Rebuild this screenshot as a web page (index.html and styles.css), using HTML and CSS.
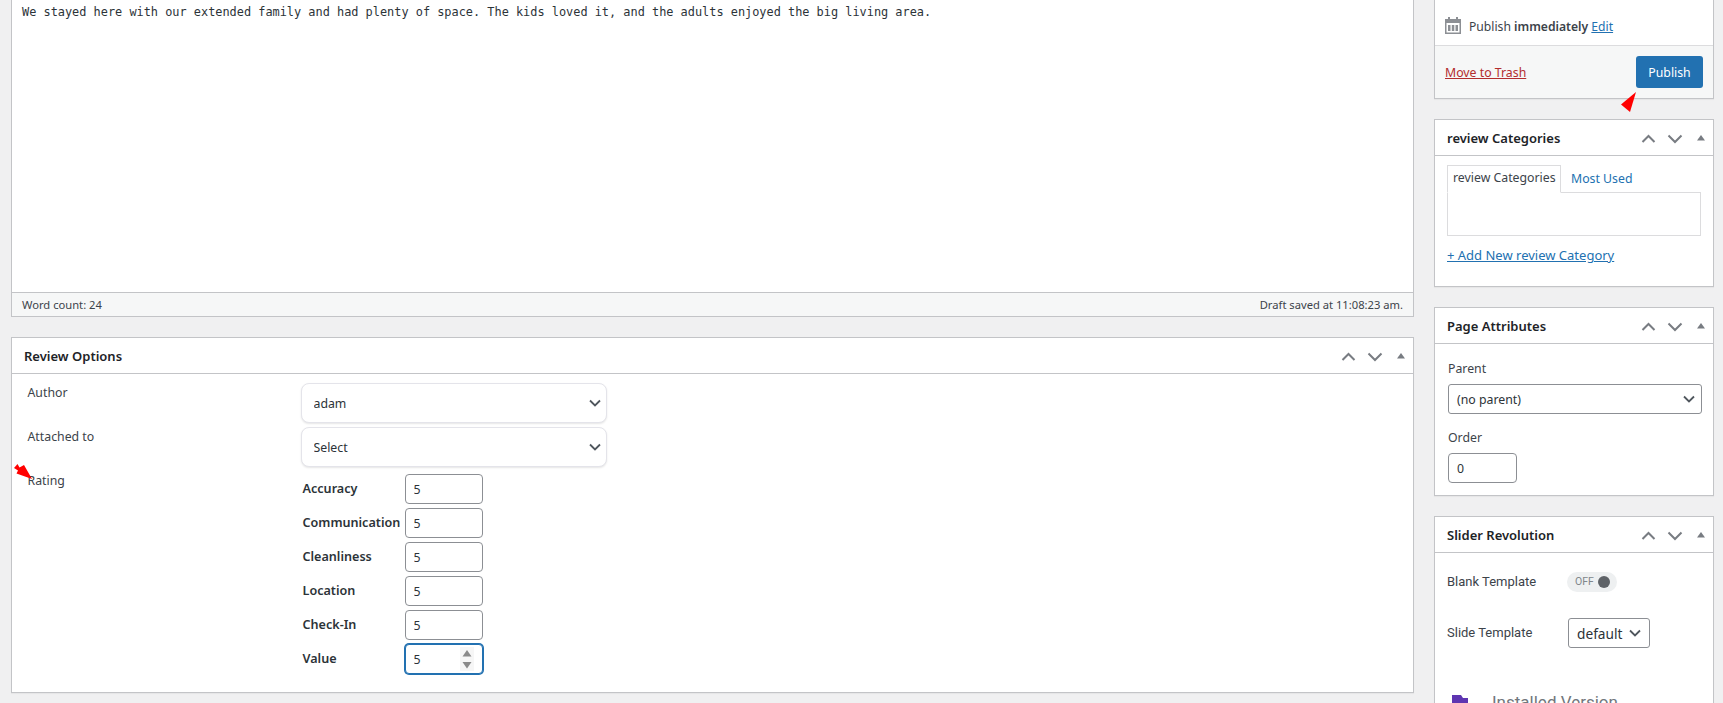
FILE: index.html
```html
<!DOCTYPE html>
<html lang="en">
<head>
<meta charset="utf-8">
<title>Edit review</title>
<link rel="stylesheet" href="styles.css">
</head>
<body>
<svg class="defs" width="0" height="0" aria-hidden="true">
  <symbol id="handles" viewBox="0 0 64 12">
    <path d="M1.500 10 7.500 4l6 6" fill="none" stroke="#787c82" stroke-width="2"/>
    <path d="M27.500 3.500l6.500 6.500 6.500-6.500" fill="none" stroke="#787c82" stroke-width="2"/>
    <path d="M56 8.500l4-5.500 4 5.500z" fill="#787c82"/>
  </symbol>
</svg>
<div class="page">
  <main class="main">
    <section class="editor">
      <div class="editor-text">We stayed here with our extended family and had plenty of space. The kids loved it, and the adults enjoyed the big living area.</div>
      <div class="editor-foot"><span>Word count: 24</span><span>Draft saved at 11:08:23 am.</span></div>
    </section>

    <section class="box review">
      <header class="box-head"><h2>Review Options</h2><svg class="handles"><use href="#handles"/></svg></header>
      <div class="review-body">
        <div class="review-label">Author</div>
        <div class="review-field"><select class="soft-select"><option>adam</option></select></div>
        <div class="review-label">Attached to</div>
        <div class="review-field"><select class="soft-select"><option>Select</option></select></div>
        <div class="review-label rating-label">Rating</div>
        <div class="ratings">
          <label class="rating"><b>Accuracy</b><input class="num" type="text" value="5"></label>
          <label class="rating"><b>Communication</b><input class="num" type="text" value="5"></label>
          <label class="rating"><b>Cleanliness</b><input class="num" type="text" value="5"></label>
          <label class="rating"><b>Location</b><input class="num" type="text" value="5"></label>
          <label class="rating"><b>Check-In</b><input class="num" type="text" value="5"></label>
          <label class="rating"><b>Value</b>
            <span class="num-wrap">
              <input class="num focused" type="text" value="5">
              <svg class="spin" width="14" height="24" viewBox="0 0 14 24"><rect width="14" height="24" fill="#f6f6f6"/><path d="M2.500 9.500 7 3l4.500 6.500z" fill="#8a8a8a"/><path d="M2.500 15 7 21.500l4.500-6.500z" fill="#8a8a8a"/></svg>
            </span>
          </label>
        </div>
      </div>
    </section>
  </main>

  <aside class="side">
    <section class="box publish">
      <div class="pub-row">
        <svg class="cal" width="16" height="17" viewBox="0 0 16 17"><path d="M3 0h2v2h6V0h2v2h3v15H0V2h3zM1.500 6v9.500h13V6zM3 8h2.500v6H3zm3.800 0h2.500v6H6.800zm3.700 0H13v6h-2.500z" fill="#8c8f94"/></svg>
        <span>Publish <b>immediately</b> <a href="#">Edit</a></span>
      </div>
      <div class="pub-actions"><a class="trash" href="#">Move to Trash</a><button class="publish-btn">Publish</button></div>
    </section>

    <section class="box cats">
      <header class="box-head"><h2>review Categories</h2><svg class="handles"><use href="#handles"/></svg></header>
      <div class="cats-body">
        <div class="tabs"><span class="tab active">review Categories</span><a class="tab" href="#">Most Used</a></div>
        <div class="tab-panel"></div>
        <a class="add-link" href="#">+ Add New review Category</a>
      </div>
    </section>

    <section class="box attrs">
      <header class="box-head"><h2>Page Attributes</h2><svg class="handles"><use href="#handles"/></svg></header>
      <div class="attrs-body">
        <div class="attr-label">Parent</div>
        <select class="wp-select parent"><option>(no parent)</option></select>
        <div class="attr-label order-label">Order</div>
        <input class="order" type="text" value="0">
      </div>
    </section>

    <section class="box slider">
      <header class="box-head"><h2>Slider Revolution</h2><svg class="handles"><use href="#handles"/></svg></header>
      <div class="slider-body">
        <div class="slider-row blank"><span class="slider-label">Blank Template</span><span class="toggle">OFF<i></i></span></div>
        <div class="slider-row tmpl"><span class="slider-label">Slide Template</span><select class="wp-select default"><option>default</option></select></div>
        <div class="version">
          <svg width="16" height="14" viewBox="0 0 16 14"><path d="M0 0h9l2 3h5v11H0z" fill="#5e35b1"/></svg>
          <span>Installed Version</span>
        </div>
      </div>
    </section>
  </aside>
</div>
<svg class="marks" width="1723" height="703" aria-hidden="true">
  <path d="M1636 92 1621 104.500 1630 112z" fill="#f00"/>
  <path d="M32 479 24 465 19.500 467.500 17.500 464 14 468 18 470.500 16.500 473.500z" fill="#f00"/>
</svg>
</body>
</html>
```
FILE: styles.css
```css
* { box-sizing: border-box; }
html, body { margin: 0; height: 703px; overflow: hidden; }
body {
  background: #f0f0f1;
  color: #3c434a;
  font-family: "Noto Sans", "Open Sans", sans-serif;
  font-size: 12.300px;
  line-height: 18px;
  position: relative;
}
a { color: #2271b1; }
b { font-weight: 600; }
.defs { position: absolute; }
.page { display: flex; gap: 20px; padding-left: 11px; align-items: flex-start; }
.main { width: 1403px; flex: none; }
.side { width: 280px; flex: none; }

.box { background: #fff; border: 1px solid #c3c4c7; box-shadow: 0 1px 1px rgba(0,0,0,.04); }
.box-head {
  height: 36px; display: flex; align-items: center; justify-content: space-between;
  padding: 0 8px 0 12px; border-bottom: 1px solid #c3c4c7; color: #1d2327;
}
.box-head h2 { margin: 0; font-size: 13px; font-weight: 600; line-height: 18px; }
.handles { width: 64px; height: 12px; }

.editor { border: 1px solid #c3c4c7; border-top: 0; background: #fff; }
.editor-text {
  height: 292px; padding: 3px 10px;
  font-family: "DejaVu Sans Mono", monospace; font-size: 11.900px; line-height: 19px; color: #2c3338;
}
.editor-foot {
  height: 24px; display: flex; justify-content: space-between; align-items: center;
  padding: 0 10px; background: #f6f7f7; border-top: 1px solid #c3c4c7; font-size: 11.200px;
}

.review { margin-top: 20px; height: 356px; }
.review-body { display: grid; grid-template-columns: 273px 306px; padding: 9px 0 0 15.500px; row-gap: 4px; }
.review-label { padding-top: 1px; }
.soft-select, .wp-select {
  appearance: none; font: inherit; color: #2c3338; background-color: #fff; background-repeat: no-repeat;
  background-image: url("data:image/svg+xml,%3Csvg xmlns='http://www.w3.org/2000/svg' width='12' height='8' viewBox='0 0 12 8'%3E%3Cpath d='M1 1.500l5 5 5-5' fill='none' stroke='%2350575e' stroke-width='1.800'/%3E%3C/svg%3E");
}
.soft-select {
  width: 306px; height: 40px; display: block; padding: 1px 24px 0 12px;
  border: 1px solid #e4e4ea; border-radius: 8px; box-shadow: 0 1px 2px rgba(0,0,0,.1);
  background-position: right 5px center;
}
.ratings { display: flex; flex-direction: column; gap: 4px; padding-top: 3px; }
.rating { display: flex; align-items: center; height: 30px; color: #2c3338; }
.rating b { width: 104px; flex: none; padding-left: 2px; font-size: 12.600px; }
.num {
  width: 78px; height: 30px; padding: 0 8px; font: inherit; color: #2c3338; background: #fff;
  border: 1px solid #8c8f94; border-radius: 4px; outline: 0;
}
.num.focused { border-color: #2271b1; box-shadow: 0 0 0 1px #2271b1; }
.num-wrap { position: relative; display: block; height: 30px; }
.spin { position: absolute; right: 9px; top: 3px; }

.publish { border-top: 0; height: 99px; }
.pub-row { height: 45px; padding: 18px 0 0 10px; display: flex; align-items: flex-start; gap: 8px; }
.cal { flex: none; margin-top: -1px; }
.pub-row span { font-size: 12.150px; }
.pub-actions {
  height: 53px; display: flex; justify-content: space-between; align-items: flex-start;
  padding: 10px 10px 0 10px; background: #f6f7f7; border-top: 1px solid #dcdcde;
}
.trash { color: #b32d2e; margin-top: 8px; }
.publish-btn {
  width: 67px; height: 32px; border: 0; border-radius: 3px; background: #2271b1; color: #fff;
  font: inherit; padding: 1px 0 0;
}

.cats { margin-top: 20px; height: 168px; }
.cats-body { padding: 9px 12px 0; }
.tabs { display: flex; height: 27px; position: relative; z-index: 1; }
.tab { padding: 0 6px; line-height: 27px; text-decoration: none; }
.tab.active {
  width: 114px; padding: 0 5px; border: 1px solid #dcdcde; border-bottom-color: #fff; height: 28px; background: #fff;
  white-space: nowrap; line-height: 24px;
}
.tabs a.tab { padding-left: 10px; }
.tab-panel { height: 44px; width: 254px; border: 1px solid #dcdcde; }
.add-link { display: block; margin-top: 10px; font-size: 13px; }

.attrs { margin-top: 20px; height: 189px; }
.attrs-body { padding: 15px 13px 0; }
.attr-label { height: 18px; line-height: 20px; }
.wp-select {
  height: 30px; padding: 1px 24px 0 8px; border: 1px solid #8c8f94; border-radius: 3px;
  background-position: right 6px center;
}
.parent { display: block; width: 254px; margin-top: 7px; }
.order-label { margin-top: 14px; }
.order {
  display: block; width: 69px; height: 30px; margin-top: 7px; padding: 1px 8px 0; font: inherit; color: #2c3338;
  border: 1px solid #8c8f94; border-radius: 4px;
}

.slider { margin-top: 20px; height: 220px; }
.slider-body { padding: 0 12px; font-family: Roboto, "Noto Sans", sans-serif; font-size: 13px; }
.slider-row { display: flex; align-items: center; }
.slider-label { width: 120px; flex: none; }
.blank { height: 20px; margin-top: 19px; }
.toggle {
  width: 50px; height: 20px; display: flex; align-items: center; gap: 4px; padding-left: 8px;
  background: #eef0f1; border-radius: 10px; font-size: 10.500px; color: #80868b;
}
.toggle i { width: 12px; height: 12px; border-radius: 50%; background: #5f6368; }
.tmpl { height: 30px; margin-top: 26px; }
.default {
  width: 82px; font-family: "Noto Sans", sans-serif; font-size: 13.700px;
  background-position: right 8px center; margin-left: 1px;
}
.version { display: flex; align-items: center; gap: 24px; margin: 42px 0 0 5px; height: 24px; color: #72777c; font-size: 17px; }

.marks { position: absolute; left: 0; top: 0; pointer-events: none; }
```
